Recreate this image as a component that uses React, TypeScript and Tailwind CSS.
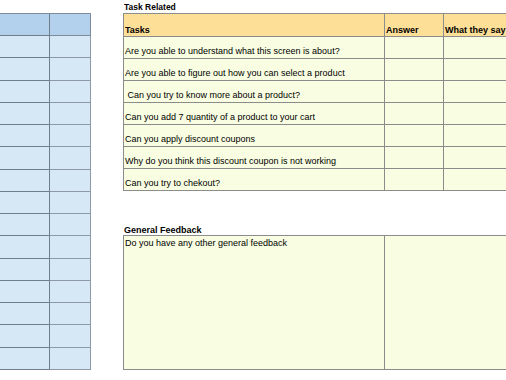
const tasks = [
  "Are you able to understand what this screen is about?",
  "Are you able to figure out how you can select a product",
  "\u00a0Can you try to know more about a product?",
  "Can you add 7 quantity of a product to your cart",
  "Can you apply discount coupons",
  "Why do you think this discount coupon is not working",
  "Can you try to chekout?",
];

const leftRows = Array.from({ length: 15 }, (_, i) => i);

export default function App() {
  return (
    <div
      className="w-[506px] h-[380px] overflow-hidden bg-white flex text-black"
      style={{ fontFamily: '"Liberation Sans", Arial, sans-serif' }}
    >
      {/* left blue sheet */}
      <div className="w-[91px] shrink-0 pt-[13px]">
        <div className="grid grid-cols-[50px_41px] border-t border-[#7d8c98]">
          <div className="h-[22px] bg-[#b3d1ec] border-r border-b border-[#6f7e8a]" />
          <div className="h-[22px] bg-[#b3d1ec] border-r border-b border-[#7d8c98]" />
        </div>
        <div className="grid grid-cols-[50px_41px] grid-rows-[repeat(15,1fr)] h-[334px]">
          {leftRows.map((r) => (
            <div key={r} className="contents">
              <div className="bg-[#d6e7f6] border-r border-b border-[#6f7e8a]" />
              <div className="bg-[#d6e7f6] border-r border-b border-[#8d9aa5]" />
            </div>
          ))}
        </div>
      </div>

      <div className="ml-[32px] flex-1 min-w-0 flex flex-col">
        {/* task table */}
        <div className="h-[13px] text-[8.5px] font-bold leading-[15px] pl-[1px]">Task Related</div>
        <div className="grid grid-cols-[261px_59px_80px] w-[400px] border-t border-l border-[#8c8c8c]">
          <div className="h-[23px] bg-[#fedf97] border-r border-b border-[#8c8c8c] flex items-end pl-[1px] text-[9px] leading-[12px] font-bold">
            Tasks
          </div>
          <div className="h-[23px] bg-[#fedf97] border-r border-b border-[#8c8c8c] flex items-end pl-[1px] text-[9px] leading-[12px] font-bold">
            Answer
          </div>
          <div className="h-[23px] bg-[#fedf97] border-r border-b border-[#8c8c8c] flex items-end pl-[1px] text-[9px] leading-[12px] font-bold whitespace-nowrap">
            What they say
          </div>
          {tasks.map((t) => (
            <div key={t} className="contents">
              <div className="h-[22px] bg-[#f9fde2] border-r border-b border-[#8c8c8c] flex items-end pl-[1px] pb-[1px] text-[9px] leading-[12px] whitespace-pre">
                {t}
              </div>
              <div className="h-[22px] bg-[#f9fde2] border-r border-b border-[#8c8c8c]" />
              <div className="h-[22px] bg-[#f9fde2] border-r border-b border-[#8c8c8c]" />
            </div>
          ))}
        </div>

        {/* general feedback */}
        <div className="mt-[33px] h-[11px] text-[9px] font-bold leading-[12px] pl-[1px]">General Feedback</div>
        <div className="grid grid-cols-[261px_139px] w-[400px] h-[135px] border-t border-l border-[#8c8c8c]">
          <div className="bg-[#f9fde2] border-r border-b border-[#8c8c8c] pl-[1px] pt-[1px] text-[9px] leading-[12px]">
            Do you have any other general feedback
          </div>
          <div className="bg-[#f9fde2] border-r border-b border-[#8c8c8c]" />
        </div>
      </div>
    </div>
  );
}
